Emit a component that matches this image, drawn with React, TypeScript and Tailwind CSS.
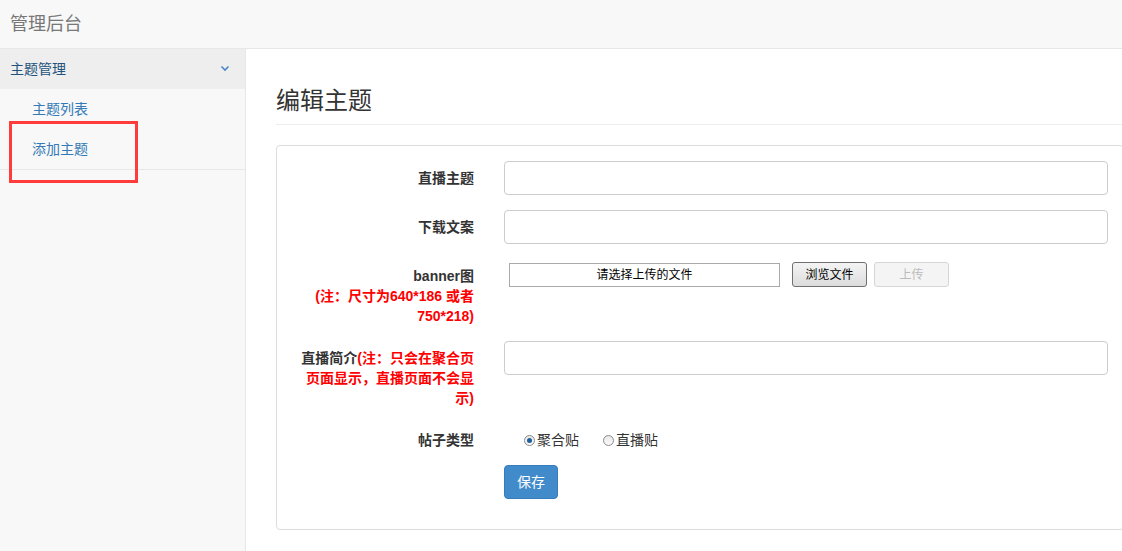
import React from 'react';

const font = { fontFamily: '"Liberation Sans", "Noto Sans CJK SC", sans-serif' };

function Radio({ checked, label }: { checked?: boolean; label: string }) {
  return (
    <label className="inline-flex items-center text-[14px] text-[#333]">
      <span className="relative mr-[2px] inline-block h-[11px] w-[11px] rounded-full border border-[#8a8a8a] bg-gradient-to-b from-[#e8e8e8] to-[#fafafa]">
        {checked && (
          <span className="absolute left-[2px] top-[2px] h-[5px] w-[5px] rounded-full bg-[#1d5f9a]" />
        )}
      </span>
      {label}
    </label>
  );
}

function Row({ label, children }: { label: React.ReactNode; children: React.ReactNode }) {
  return (
    <div className="mb-[15px] grid grid-cols-[212px_1fr]">
      <div className="px-[15px] pt-[7px] text-right text-[14px] font-bold leading-[20px] text-[#333]">{label}</div>
      <div className="px-[15px]">{children}</div>
    </div>
  );
}

function TextInput() {
  return <div className="h-[34px] w-full rounded-[4px] border border-[#ccc] bg-white" />;
}

export default function App() {
  return (
    <div className="flex h-[551px] w-[1122px] flex-col overflow-hidden bg-white" style={font}>
      <header className="flex h-[49px] shrink-0 items-center border-b border-[#e7e7e7] bg-[#f8f8f8] px-[10px]">
        <span className="text-[18px] text-[#777]">管理后台</span>
      </header>
      <div className="flex min-h-0 flex-1">
        <aside className="relative w-[246px] shrink-0 border-r border-[#e7e7e7] bg-[#f8f8f8]">
          <div className="flex h-[40px] items-center justify-between bg-[#eee] pl-[10px] pr-[15px] text-[14px] text-[#23527c]">
            <span>主题管理</span>
            <svg width="10" height="7" viewBox="0 0 10 7" className="mb-[2px]">
              <polyline points="1.5,1.5 5,5 8.5,1.5" fill="none" stroke="#4a86c5" strokeWidth="1.6" />
            </svg>
          </div>
          <ul className="border-b border-[#e7e7e7] text-[14px] text-[#337ab7]">
            <li className="flex h-[40px] items-center pl-[32px]">主题列表</li>
            <li className="flex h-[40px] items-center pl-[32px]">添加主题</li>
          </ul>
          <div className="pointer-events-none absolute left-[9px] top-[72px] h-[62px] w-[129px] border-[3px] border-[#ff3b3b]" />
        </aside>
        <main className="min-w-0 flex-1 overflow-hidden pl-[30px] pt-[38px]">
          <div className="mb-[20px] w-[900px] border-b border-[#eee] pb-[10px]">
            <h1 className="text-[24px] leading-[27px] text-[#333]">编辑主题</h1>
          </div>
          <div className="w-[848px] rounded-[4px] border border-[#ddd] bg-white pb-[30px] pt-[15px]">
            <Row label="直播主题">
              <TextInput />
            </Row>
            <Row label="下载文案">
              <TextInput />
            </Row>
            <Row
              label={
                <>
                  <div>banner图</div>
                  <div className="text-[#f00]">(注：尺寸为640*186 或者 750*218)</div>
                </>
              }
            >
              <div className="flex items-center pt-[3px] text-[12px]">
                <div className="ml-[5px] flex h-[24px] w-[271px] items-center justify-center border border-[#aaa] bg-white text-[#000]">
                  请选择上传的文件
                </div>
                <button className="ml-[12px] h-[25px] w-[75px] rounded-[3px] border border-[#707070] bg-gradient-to-b from-[#f4f4f4] to-[#dcdcdc] text-[12px] text-[#000]">
                  浏览文件
                </button>
                <button className="ml-[7px] h-[25px] w-[75px] rounded-[3px] border border-[#d5d5d5] bg-[#f4f4f4] text-[12px] text-[#bbb]">
                  上传
                </button>
              </div>
            </Row>
            <Row
              label={
                <p>
                  直播简介<span className="text-[#f00]">(注：只会在聚合页页面显示，直播页面不会显示)</span>
                </p>
              }
            >
              <TextInput />
            </Row>
            <div className="mb-[15px] grid grid-cols-[212px_1fr]">
              <div className="px-[15px] pt-[7px] text-right text-[14px] font-bold leading-[20px] text-[#333]">帖子类型</div>
              <div className="flex gap-[24px] pl-[35px] pr-[15px] pt-[7px] leading-[20px]">
                <Radio checked label="聚合贴" />
                <Radio label="直播贴" />
              </div>
            </div>
            <div className="grid grid-cols-[212px_1fr]">
              <div />
              <div className="px-[15px]">
                <button className="h-[34px] rounded-[4px] border border-[#357ebd] bg-[#428bca] px-[12px] text-[14px] text-white">
                  保存
                </button>
              </div>
            </div>
          </div>
        </main>
      </div>
    </div>
  );
}
